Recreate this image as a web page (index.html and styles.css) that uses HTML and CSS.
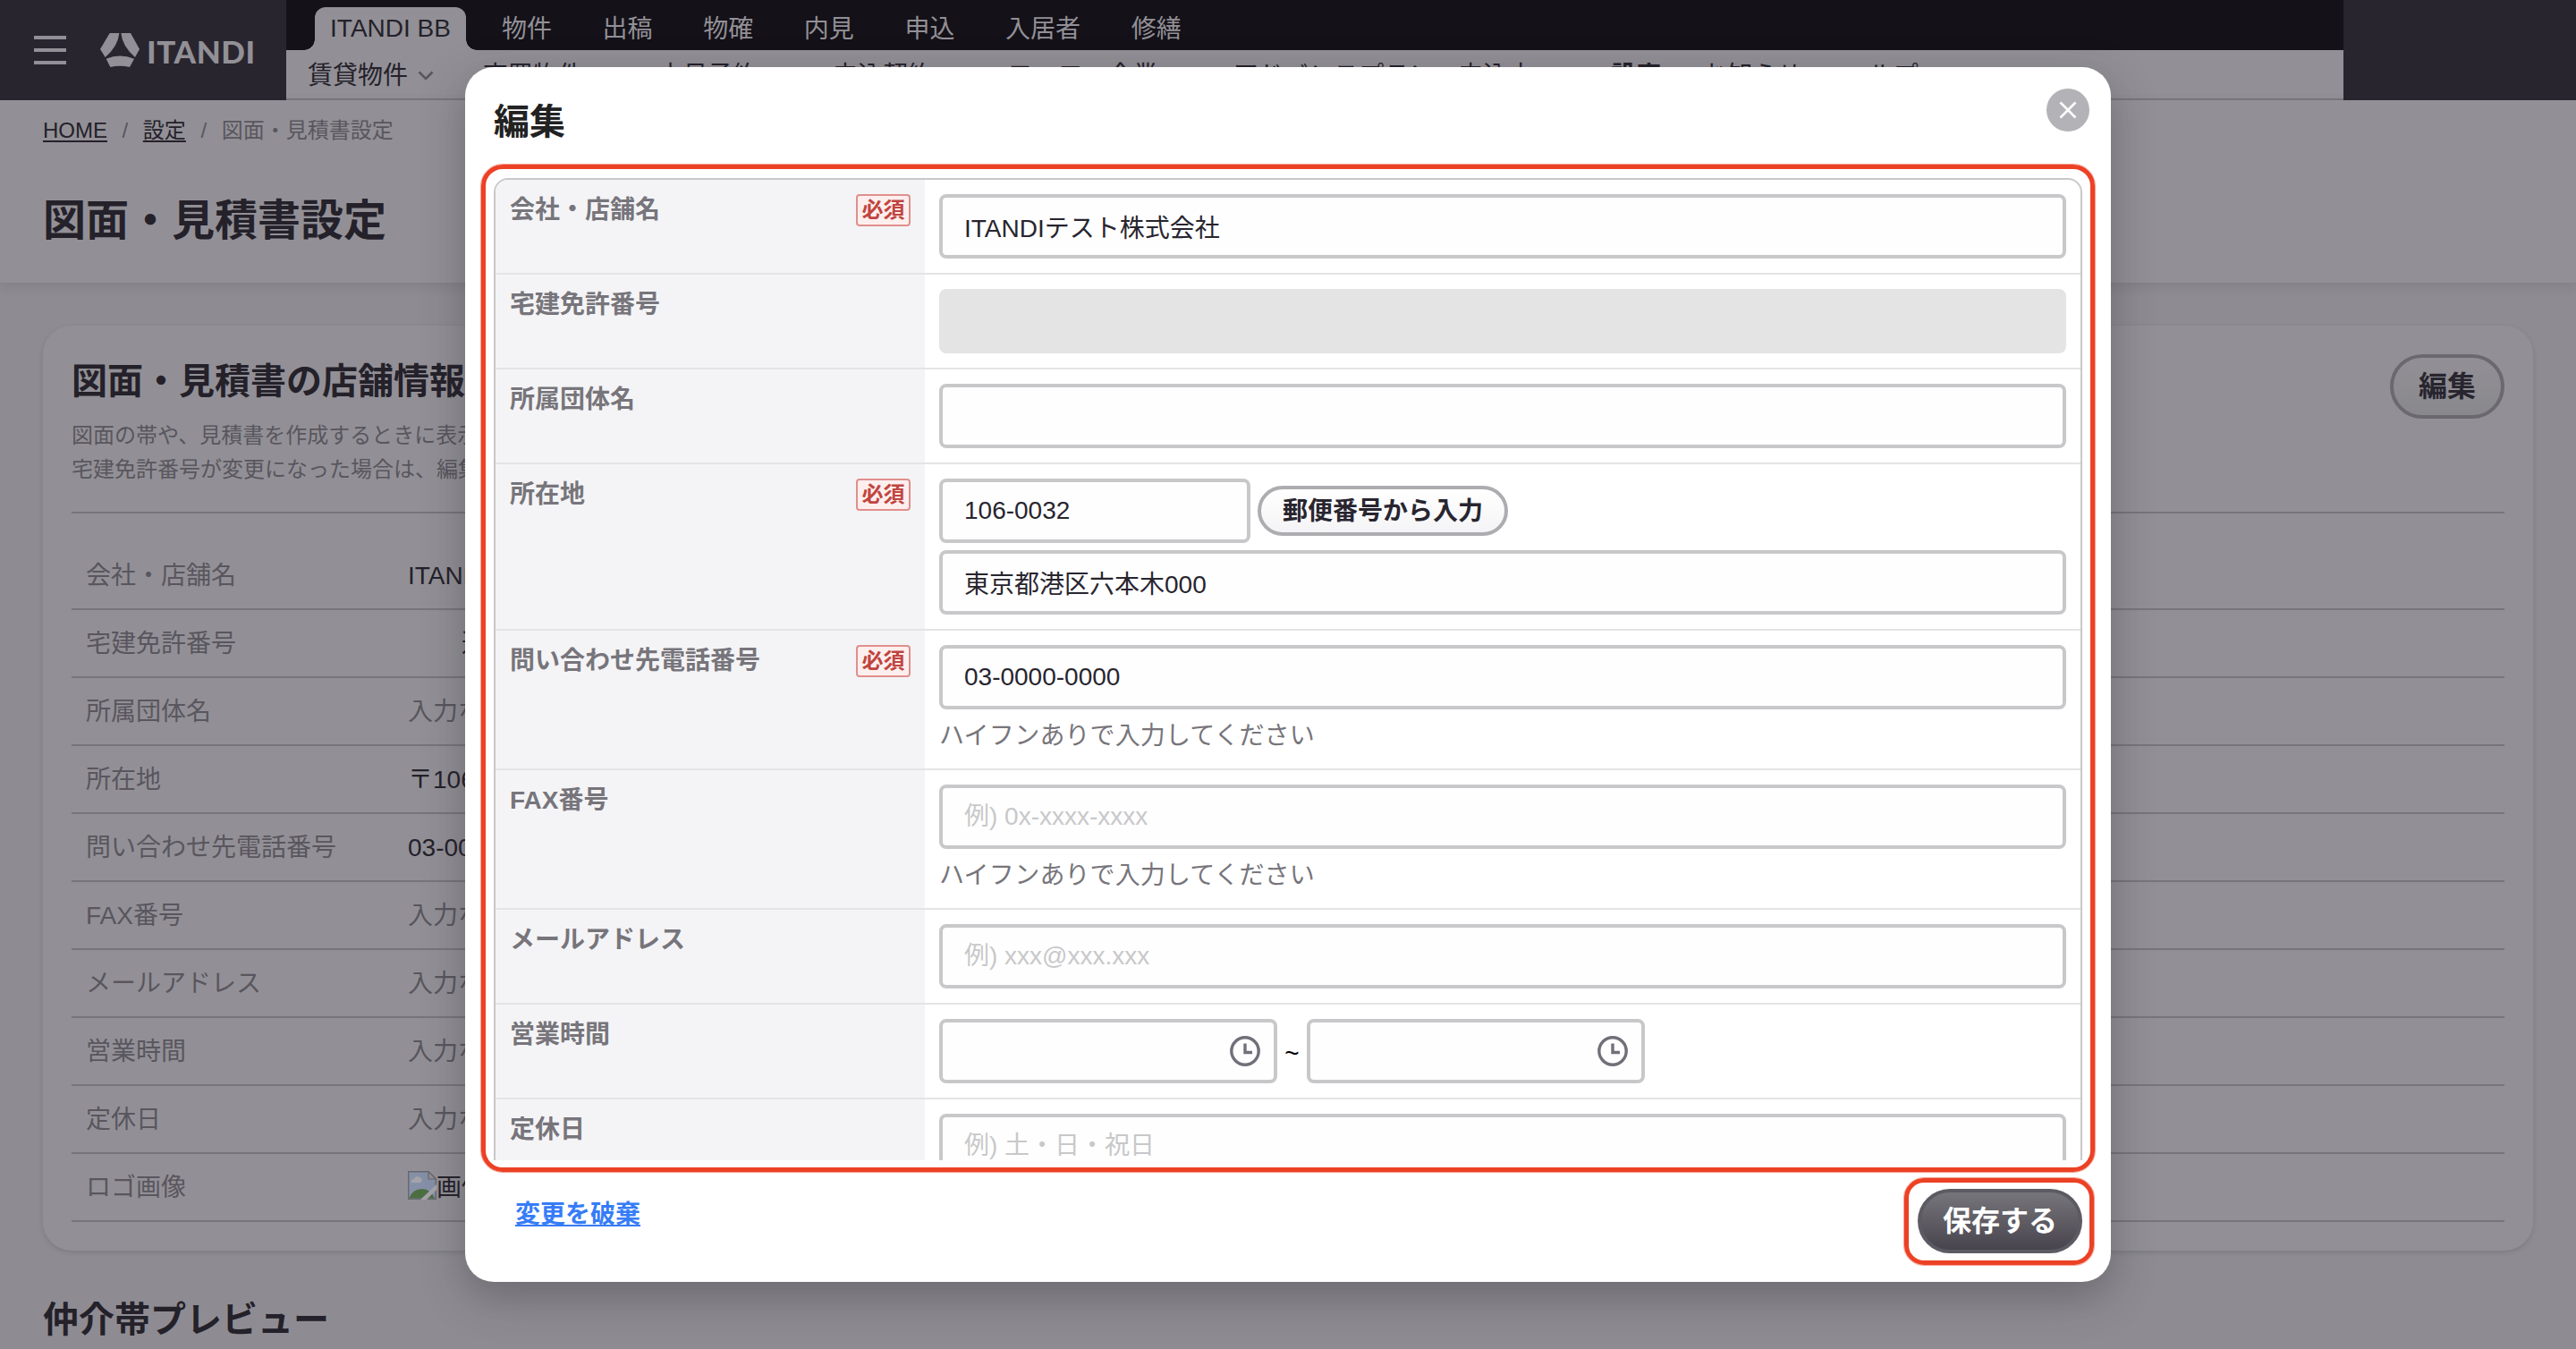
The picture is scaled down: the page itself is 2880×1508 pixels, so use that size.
FILE: index.html
```html
<!DOCTYPE html>
<html lang="ja">
	<head>
	<meta charset="UTF-8" />
	<meta name="viewport" content="width=device-width, initial-scale=1.0" />
	<title>図面・見積書設定 | ITANDI BB</title>
	<link rel="stylesheet" href="styles.css">
	</head>
	<body>
		<header class="header">
			<div class="brand">
				<div class="burger"><span></span><span></span><span></span></div>
				<svg class="logo" width="44" height="38" viewBox="276 111 132 114">
					<g fill="#929096">
						<path d="M308 111H340Q336 155 293 192L276 165Z" />
						<path d="M346 111H378L408 165L393 192Q350 155 346 111Z" />
						<path d="M296 197Q342 178 390 197L375 225Q342 218 310 225Z" />
					</g>
				</svg>
				<span class="logo-text">ITANDI</span>
			</div>
			<div class="navs">
				<nav class="topnav">
					<a class="tab">ITANDI BB</a>
					<a>物件</a><a>出稿</a><a>物確</a><a>内見</a><a>申込</a><a>入居者</a><a>修繕</a>
				</nav>
				<nav class="subnav">
					<a class="drop">賃貸物件 <svg width="18" height="11" viewBox="0 0 18 11"><path d="M1.5 1.5L9 9L16.5 1.5" fill="none" stroke="#59565e" stroke-width="2.6" /></svg></a>
					<a class="drop">売買物件</a>
					<a class="drop">内見予約</a>
					<a class="drop">申込契約</a>
					<a class="drop">フォロー企業</a>
					<a class="plan">アドバンスプラン</a>
					<a class="ext">申込中<i></i></a>
					<a class="current">設定</a>
					<a>お知らせ</a>
					<a class="ext">ヘルプ<i></i></a>
				</nav>
			</div>
			<div class="header-end"></div>
		</header>
		<div class="pagehead">
			<div class="crumbs"><a>HOME</a><span>/</span><a>設定</a><span>/</span><span>図面・見積書設定</span></div>
			<h1>図面・見積書設定</h1>
		</div>
		<main>
			<section class="card">
				<div class="card-head">
					<div>
						<h2>図面・見積書の店舗情報</h2>
						<p>図面の帯や、見積書を作成するときに表示<br>宅建免許番号が変更になった場合は、編集</p>
					</div>
					<button class="btn btn-dim">編集</button>
				</div>
				<dl class="info">
					<div><dt>会社・店舗名</dt><dd>ITANDI</dd></div>
					<div><dt>宅建免許番号</dt><dd class="license">送</dd></div>
					<div><dt>所属団体名</dt><dd class="empty">入力なし</dd></div>
					<div><dt>所在地</dt><dd>〒106</dd></div>
					<div><dt>問い合わせ先電話番号</dt><dd>03-0000</dd></div>
					<div><dt>FAX番号</dt><dd class="empty">入力なし</dd></div>
					<div><dt>メールアドレス</dt><dd class="empty">入力なし</dd></div>
					<div><dt>営業時間</dt><dd class="empty">入力なし</dd></div>
					<div><dt>定休日</dt><dd class="empty">入力なし</dd></div>
					<div>
						<dt>ロゴ画像</dt>
						<dd class="noimg">
							<svg width="32" height="32" viewBox="0 0 32 32">
								<path d="M.7.7H23L31.3 9V31.3H.7Z" fill="#8590a8" stroke="#68666d" stroke-width="1.4" />
								<path d="M23 .7V9H31.3Z" fill="#929096" stroke="#68666d" stroke-width="1.2" />
								<path d="M4 13Q3 9 7 9Q9 4 13 7Q17 8 15 13Z" fill="#a5a3a9" />
								<path d="M1.4 30.6Q5 20 16 20Q25 20 30 30.6Z" fill="#4c6e42" />
								<path d="M14 32L32 15V21L21 32Z" fill="#a5a3a9" />
							</svg>画像
						</dd>
					</div>
				</dl>
			</section>
			<h2 class="preview-title">仲介帯プレビュー</h2>
		</main>

		<div class="modal">
			<div class="modal-head">
				<h2>編集</h2>
				<button class="close">
					<svg width="20" height="20" viewBox="0 0 20 20"><path d="M1.5 1.5L18.5 18.5M18.5 1.5L1.5 18.5" stroke="#fff" stroke-width="2.6" /></svg>
				</button>
			</div>
			<div class="scroll">
				<div class="form">
					<div class="row">
						<div class="label">会社・店舗名<span class="must">必須</span></div>
						<div class="field"><input type="text" value="ITANDIテスト株式会社"></div>
					</div>
					<div class="row">
						<div class="label">宅建免許番号</div>
						<div class="field"><input type="text" disabled></div>
					</div>
					<div class="row">
						<div class="label">所属団体名</div>
						<div class="field"><input type="text"></div>
					</div>
					<div class="row">
						<div class="label">所在地<span class="must">必須</span></div>
						<div class="field">
							<div class="line zip"><input type="text" value="106-0032"><button class="btn btn-small">郵便番号から入力</button></div>
							<input type="text" value="東京都港区六本木000">
						</div>
					</div>
					<div class="row">
						<div class="label">問い合わせ先電話番号<span class="must">必須</span></div>
						<div class="field">
							<input type="text" value="03-0000-0000">
							<p class="hint">ハイフンありで入力してください</p>
						</div>
					</div>
					<div class="row">
						<div class="label">FAX番号</div>
						<div class="field">
							<input type="text" placeholder="例) 0x-xxxx-xxxx">
							<p class="hint">ハイフンありで入力してください</p>
						</div>
					</div>
					<div class="row">
						<div class="label">メールアドレス</div>
						<div class="field"><input type="text" placeholder="例) xxx@xxx.xxx"></div>
					</div>
					<div class="row">
						<div class="label">営業時間</div>
						<div class="field line hours">
							<div class="time"><svg width="34" height="34" viewBox="0 0 34 34" fill="none" stroke="#716f78" stroke-width="3.4"><circle cx="17" cy="17" r="15.2" /><path d="M17 8.5V18.5H25" /></svg></div>
							<span class="tilde">~</span>
							<div class="time"><svg width="34" height="34" viewBox="0 0 34 34" fill="none" stroke="#716f78" stroke-width="3.4"><circle cx="17" cy="17" r="15.2" /><path d="M17 8.5V18.5H25" /></svg></div>
						</div>
					</div>
					<div class="row">
						<div class="label">定休日</div>
						<div class="field"><input type="text" placeholder="例) 土・日・祝日"></div>
					</div>
				</div>
			</div>
			<div class="modal-foot">
				<a class="discard">変更を破棄</a>
				<button class="btn btn-save">保存する</button>
			</div>
			<div class="mark mark-form"></div>
			<div class="mark mark-save"></div>
		</div>
	</body>
</html>
```

FILE: styles.css
```css
* { box-sizing: border-box; margin: 0; padding: 0; }
html { font-family: "Liberation Sans", "Noto Sans CJK JP", sans-serif; font-size: 28px; }
body { background-color: #8e8c92; color: #24212a; height: 1508px; overflow: hidden; }
h1, h2 { font-weight: bold; }
button, input { font-family: inherit; }

/* header */
.header { display: flex; height: 112px; background: #929096; }
.brand { width: 320px; padding-left: 38px; display: flex; align-items: center; background: #28252f; }
.burger { width: 36px; height: 32px; display: flex; flex-direction: column; justify-content: space-between; }
.burger span { height: 4px; background: #929096; }
.logo { margin-left: 38px; }
.logo-text { margin: 2px 0 0 8px; font-family: Lato, sans-serif; font-weight: 900; font-size: 35px; line-height: 46px; letter-spacing: .6px; color: #929096; }
.navs { flex: 1; }
.header-end { width: 260px; background: #28252f; }
.topnav { height: 56px; padding: 8px 0 0 32px; display: flex; gap: 56.6px; line-height: 49px; background: #141118; color: #929096; white-space: nowrap; }
.tab { position: relative; width: 169px; margin-right: -16.6px; text-align: center; line-height: 48px; background: #929096; color: #24212a; border-radius: 12px 12px 0 0; }
.tab::before, .tab::after { content: ""; position: absolute; bottom: 0; width: 12px; height: 12px; }
.tab::before { left: -12px; background: radial-gradient(circle at 0 0, #141118 11.5px, #929096 12px); }
.tab::after { right: -12px; background: radial-gradient(circle at 100% 0, #141118 11.5px, #929096 12px); }
.subnav { height: 56px; padding-left: 24px; display: flex; line-height: 57px; border-bottom: 2px solid #77757c; white-space: nowrap; }
.subnav a { margin-right: 46px; }
.subnav .drop { margin-right: 83.7px; }
.subnav .drop svg { position: absolute; margin: 23px 0 0 11px; }
.subnav .plan { margin-right: 27px; }
.subnav .current { font-weight: bold; }
.ext i { display: inline-block; width: 14px; height: 18px; margin: 0 53px 0 20px; border: 2px solid #59565e; }
.subnav .ext { margin-right: 0; }

.pagehead { height: 204px; padding: 16px 48px 0; background: #929096; box-shadow: 0 4px 12px rgba(40, 37, 47, .12); }
.crumbs { display: flex; gap: 16.6px; font-size: 24px; line-height: 36px; color: #59565e; }
.crumbs a { color: #24212a; text-decoration: underline; text-decoration-thickness: 2px; text-underline-offset: 3px; }
.pagehead h1 { margin-top: 47px; font-size: 48px; line-height: 72px; }

/* store info */
main { padding: 48px 48px 0; }
.card { height: 1034px; padding: 32px; background: #929096; border-radius: 32px; box-shadow: 0 2px 5px rgba(40, 37, 47, .16); }
.card-head { display: flex; justify-content: space-between; align-items: flex-start; height: 178px; border-bottom: 2px solid #77757c; }
.card-head h2, .preview-title { font-size: 40px; line-height: 60px; }
.card-head p { margin-top: 12px; font-size: 24px; line-height: 38.4px; color: #59565e; }
.info { margin-top: 32px; }
.info > div { display: flex; height: 76px; padding-left: 16px; line-height: 75px; border-bottom: 2px solid #77757c; }
.info dt { width: 360px; color: #59565e; }
.info .empty { color: #59565e; }
.info .license { padding-left: 60px; }
.noimg { display: flex; align-items: center; }
.noimg svg { margin-top: -4px; }
.preview-title { margin-top: 47px; }

.btn { font-weight: bold; border: 4px solid; border-radius: 36px; white-space: nowrap; }
.btn-dim { width: 128px; height: 72px; font-size: 32px; line-height: 60px; padding-bottom: 1px; color: #28252f; border-color: #6b696f; background: linear-gradient(#929096, #89888d); }
.btn-small { width: 280px; height: 56px; font-size: 28px; line-height: 45px; color: #28252f; border-color: #adacb0; background: linear-gradient(#fff, #f4f4f6); }
.btn-save { width: 184px; height: 72px; font-size: 32px; line-height: 60px; color: #fff; border-color: #5c5a62; background: linear-gradient(#77757c, #48444d); }

/* edit dialog */
.modal { position: absolute; left: 520px; top: 75px; width: 1840px; height: 1358px; padding: 0 32px; background: #fff; border-radius: 32px; box-shadow: 0 16px 48px rgba(40, 37, 47, .35); }
.modal-head { display: flex; justify-content: space-between; height: 124px; padding-top: 24px; margin-right: -8px; }
.modal-head h2 { font-size: 40px; line-height: 74px; color: #222; }
.close { display: flex; align-items: center; justify-content: center; width: 48px; height: 48px; border: 0; border-radius: 50%; background: #b3b2b7; }
.scroll { height: 1098px; overflow: hidden; }
.form { border: 2px solid #c8c8ca; border-radius: 16px; overflow: hidden; }
.row { display: flex; border-bottom: 2px solid #e4e4e5; }
.label { display: flex; justify-content: space-between; align-items: flex-start; width: 480px; padding: 13px 16px 0; line-height: 42px; font-weight: bold; color: #77757b; background: #f4f4f6; }
.must { width: 61px; height: 36px; margin-top: 3px; border: 2px solid #e08f8c; border-radius: 4px; font-size: 24px; line-height: 31px; text-align: center; color: #c0453f; background: #fdefee; }
.field { flex: 1; padding: 16px; }
.field input { display: block; width: 100%; height: 72px; padding: 0 24px; font-size: 28px; color: #28252f; background: #fefefe; border: 4px solid #c8c8ca; border-radius: 8px; }
.field input::placeholder { color: #c8c8ca; }
.field input:disabled { background: #e4e4e4; border-color: #e4e4e4; }
.line { display: flex; align-items: center; }
.zip { gap: 8px; margin-bottom: 8px; }
.zip input { width: 348px; }
.hint { margin-top: 9px; line-height: 41px; letter-spacing: .1px; color: #77757b; }
.time { display: flex; align-items: center; justify-content: flex-end; width: 378px; height: 72px; padding-right: 15px; background: #fefefe; border: 4px solid #c8c8ca; border-radius: 8px; }
.tilde { width: 33px; padding-top: 5px; text-align: center; color: #000; }
.modal-foot { display: flex; justify-content: space-between; align-items: flex-start; padding: 32px 0 0 24px; }
.discard { margin-top: 8px; line-height: 42px; font-weight: bold; color: #367cf7; text-decoration: underline; text-decoration-thickness: 2px; text-underline-offset: 2px; }

/* red callouts over the dialog */
.mark { position: absolute; border: 5.5px solid #ec4125; outline: .5px solid rgba(236, 65, 37, .5); pointer-events: none; }
.mark-form { left: 18px; top: 109px; width: 1804px; height: 1126px; border-radius: 24px; }
.mark-save { left: 1609px; top: 1242px; width: 212px; height: 97px; border-radius: 22px; }
```
